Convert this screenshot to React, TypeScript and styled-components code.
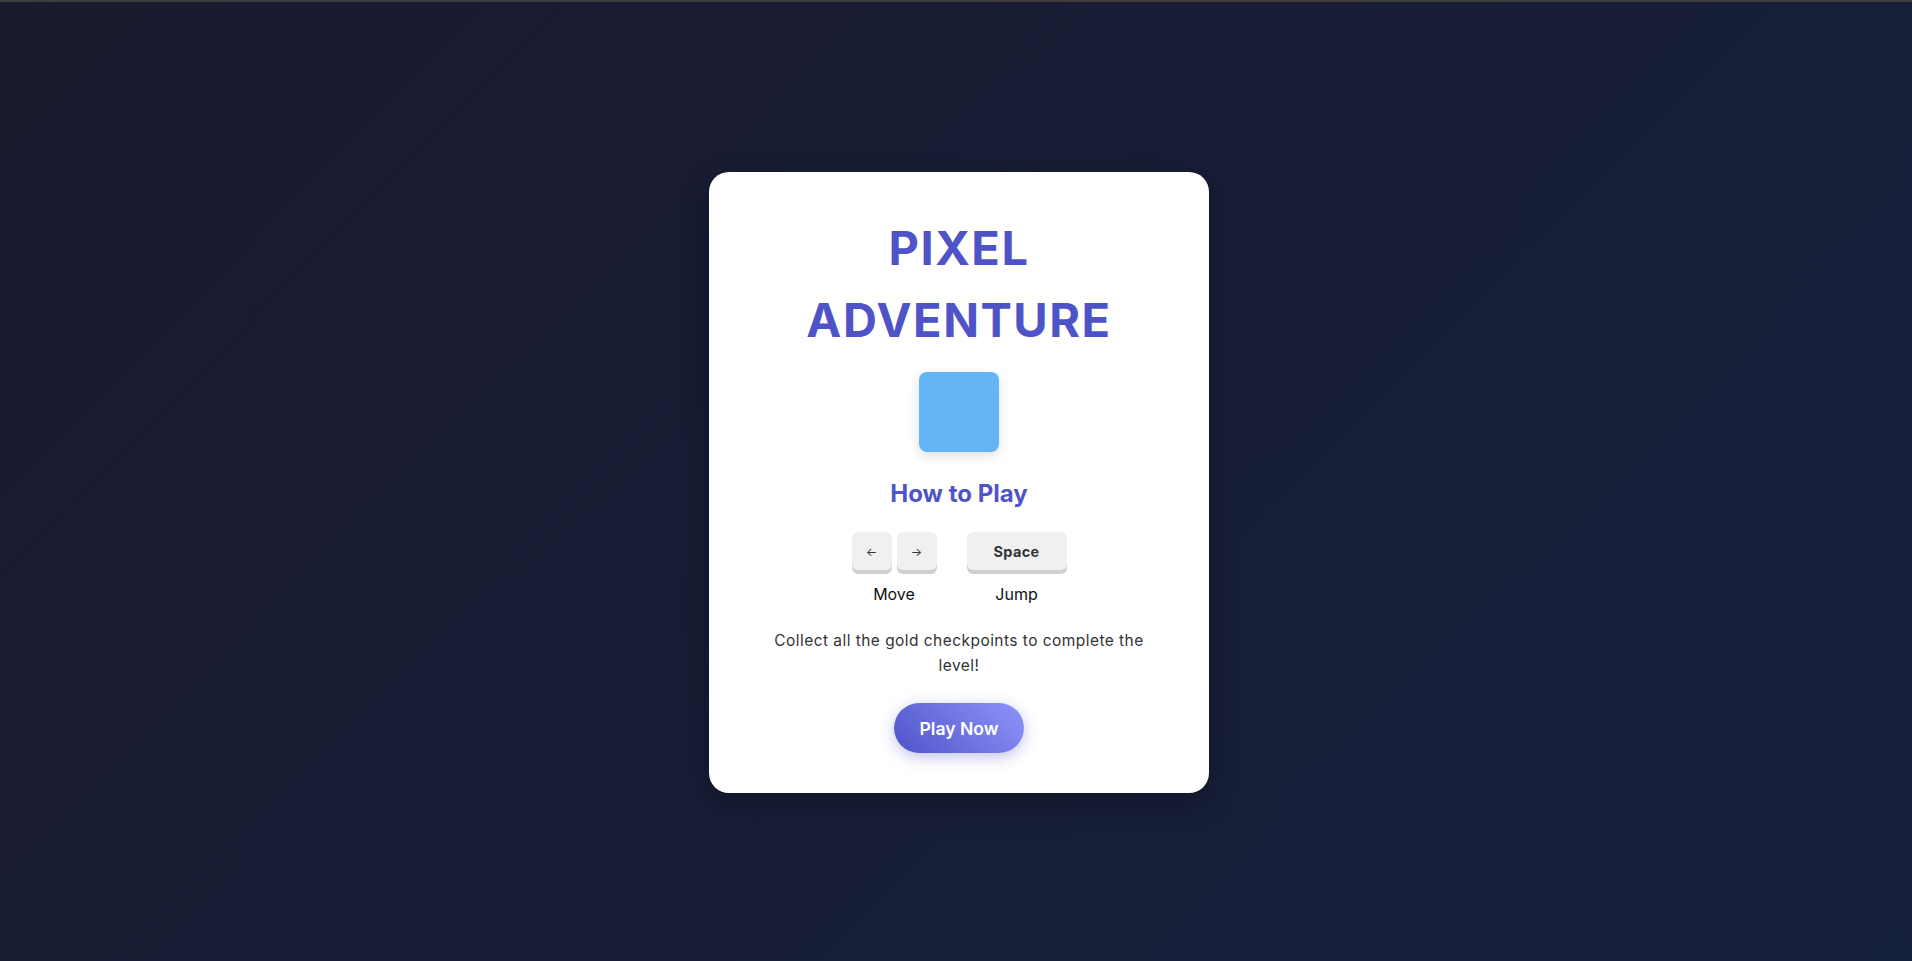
import { FC, ReactElement } from 'react';
import styled, { createGlobalStyle } from 'styled-components';

const GlobalStyle = createGlobalStyle`
    * {
        box-sizing: border-box;
    }

    html, body {
        margin: 0;
        padding: 0;
        overflow: hidden;
    }

    body {
        font-family: Inter, 'Noto Sans', sans-serif;
        background: linear-gradient(135deg, #1a1a2e, #16213e);
        min-height: 100vh;
    }
`;

const Page = styled.div`
    height: 100vh;
    border-top: 2px solid #3d3d3d;
    display: flex;
    align-items: center;
    justify-content: center;
    padding-left: 6px;
    padding-top: 2px;
`;

const Card = styled.div`
    width: 500px;
    background: #ffffff;
    border-radius: 20px;
    padding: 40px;
    box-shadow: 0 10px 30px rgba(0, 0, 0, 0.3);
    display: flex;
    flex-direction: column;
    align-items: center;
    text-align: center;
`;

const Title = styled.h1`
    margin: 0;
    font-size: 47px;
    line-height: 72px;
    font-weight: 700;
    letter-spacing: 1.5px;
    color: #4e54c8;
    text-transform: uppercase;
`;

const Player = styled.div`
    width: 80px;
    height: 80px;
    margin-top: 16px;
    border-radius: 8px;
    background: #64b5f6;
    box-shadow: 0 4px 12px rgba(0, 0, 0, 0.12);
`;

const Subtitle = styled.h2`
    margin: 24px 0 0;
    font-size: 24px;
    line-height: 36px;
    font-weight: 700;
    color: #4e54c8;
`;

const Controls = styled.div`
    display: flex;
    gap: 30px;
    margin-top: 20px;
`;

const Control = styled.div`
    display: flex;
    flex-direction: column;
    align-items: center;
    gap: 12px;
`;

const Keys = styled.div`
    display: flex;
    gap: 5px;
`;

const Key = styled.div<{ $wide?: boolean }>`
    width: ${(p) => (p.$wide ? '100px' : '40px')};
    height: 38px;
    display: flex;
    align-items: center;
    justify-content: center;
    background: #f0f0f0;
    border-radius: 6px;
    box-shadow: 0 4px 0 #d0d0d0;
    color: #333333;
    font-size: ${(p) => (p.$wide ? '14.5px' : '12px')};
    font-weight: ${(p) => (p.$wide ? 700 : 400)};
    letter-spacing: ${(p) => (p.$wide ? '0.3px' : '0')};
`;

const Label = styled.span`
    font-size: 16px;
    line-height: 24px;
    color: #111111;
`;

const Description = styled.p`
    margin: 22px 0 0;
    max-width: 400px;
    font-size: 15.5px;
    line-height: 25px;
    letter-spacing: 0.45px;
    color: #333333;
`;

const PlayButton = styled.button`
    margin-top: 25px;
    height: 50px;
    padding: 0 25px;
    border: none;
    border-radius: 25px;
    background: linear-gradient(45deg, #4e54c8, #8f94fb);
    box-shadow: 0 4px 15px rgba(78, 84, 200, 0.35);
    color: #ffffff;
    font-family: inherit;
    font-size: 17.6px;
    font-weight: 600;
    cursor: pointer;
`;

const App: FC = (): ReactElement => {
    return (
        <>
            <GlobalStyle />
            <Page>
                <Card>
                    <Title>Pixel Adventure</Title>
                    <Player />
                    <Subtitle>How to Play</Subtitle>
                    <Controls>
                        <Control>
                            <Keys>
                                <Key>←</Key>
                                <Key>→</Key>
                            </Keys>
                            <Label>Move</Label>
                        </Control>
                        <Control>
                            <Key $wide>Space</Key>
                            <Label>Jump</Label>
                        </Control>
                    </Controls>
                    <Description>Collect all the gold checkpoints to complete the level!</Description>
                    <PlayButton>Play Now</PlayButton>
                </Card>
            </Page>
        </>
    );
};

export default App;
